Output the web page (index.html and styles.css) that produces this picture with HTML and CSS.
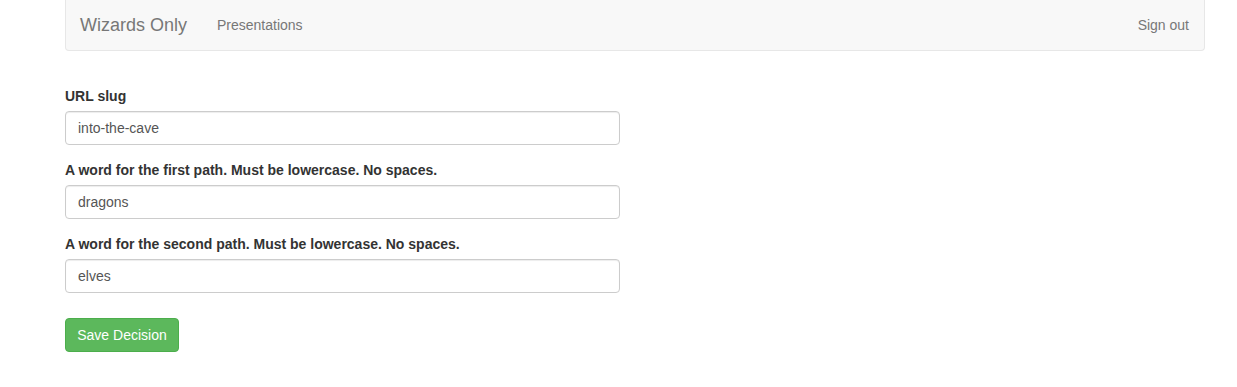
FILE: index.html
```html
<!DOCTYPE html>
<html lang="en">
<head>
    <meta charset="UTF-8">
    <meta name="viewport" content="width=device-width, initial-scale=1.0">
    <title>Wizards Only</title>
    <link rel="stylesheet" href="styles.css">
</head>
<body>
    <div class="container">
        <nav class="navbar">
            <div class="navbar-left">
                <a class="navbar-brand" href="#">Wizards Only</a>
                <a class="nav-link" href="#">Presentations</a>
            </div>
            <a class="nav-link" href="#">Sign out</a>
        </nav>

        <form class="decision-form">
            <div class="form-group">
                <label for="slug">URL slug</label>
                <input type="text" id="slug" name="slug" value="into-the-cave">
            </div>
            <div class="form-group">
                <label for="first-path">A word for the first path. Must be lowercase. No spaces.</label>
                <input type="text" id="first-path" name="first-path" value="dragons">
            </div>
            <div class="form-group">
                <label for="second-path">A word for the second path. Must be lowercase. No spaces.</label>
                <input type="text" id="second-path" name="second-path" value="elves">
            </div>
            <button type="button" class="btn-success">Save Decision</button>
        </form>
    </div>
</body>
</html>
```

FILE: styles.css
```css
body {
    font-family: "Liberation Sans", Arial, sans-serif;
    font-size: 14px;
    line-height: 20px;
    color: #333;
    background: #fff;
    margin: 0;
    padding: 0;
}
.container {
    width: 1140px;
    margin-left: 65px;
}
.navbar {
    display: flex;
    justify-content: space-between;
    align-items: center;
    height: 50px;
    background: #f8f8f8;
    border: 1px solid #e7e7e7;
    border-top: none;
    border-radius: 0 0 4px 4px;
}
.navbar-left {
    display: flex;
    align-items: center;
}
.navbar a {
    text-decoration: none;
    color: #777;
    padding: 15px;
    line-height: 20px;
}
.navbar-brand {
    font-size: 18px;
    padding-left: 14px !important;
}
.nav-link {
    font-size: 14px;
}
.decision-form {
    padding-top: 35px;
    width: 555px;
}
.form-group {
    margin-bottom: 15px;
}
label {
    display: block;
    font-weight: bold;
    margin-bottom: 5px;
}
input {
    display: block;
    box-sizing: border-box;
    width: 100%;
    height: 34px;
    padding: 6px 12px;
    font-family: inherit;
    font-size: 14px;
    color: #555;
    border: 1px solid #ccc;
    border-radius: 4px;
    box-shadow: inset 0 1px 1px rgba(0, 0, 0, 0.075);
    margin: 0;
}
.btn-success {
    margin-top: 10px;
    width: 114px;
    height: 34px;
    padding: 6px 0;
    font-family: inherit;
    font-size: 14px;
    line-height: 20px;
    color: #fff;
    background: #5cb85c;
    border: 1px solid #4cae4c;
    border-radius: 4px;
    cursor: pointer;
}
```
